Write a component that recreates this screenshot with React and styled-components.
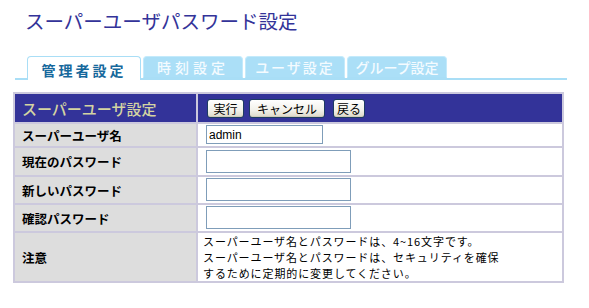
import React from "react";
import styled, { createGlobalStyle } from "styled-components";

const Global = createGlobalStyle`
  html, body { margin: 0; padding: 0; background: #ffffff; }
  body { font-family: "Noto Sans CJK JP", "Noto Sans", sans-serif; color: #000; }
`;

const Page = styled.div`
  width: 589px;
  height: 308px;
  overflow: hidden;
  padding: 10px 0 0 13px;
  box-sizing: border-box;
`;

const Title = styled.h1`
  margin: 0 0 0 12px;
  font-size: 19.5px;
  line-height: 22px;
  font-weight: normal;
  color: #333399;
  letter-spacing: 0;
`;

const TabBar = styled.div`
  display: flex;
  align-items: flex-end;
  gap: 2px;
  margin: 25px 0 0 2px;
  width: 552px;
  box-sizing: border-box;
  padding-left: 12px;
  border-bottom: 2px solid #a9def6;
  height: 23px;
`;

const Tab = styled.div`
  box-sizing: border-box;
  width: ${(p) => p.$w}px;
  height: ${(p) => (p.$active ? 24 : 22)}px;
  margin-bottom: ${(p) => (p.$active ? -2 : 0)}px;
  display: flex;
  align-items: center;
  justify-content: center;
  font-size: 14px;
  letter-spacing: ${(p) => p.$ls}px;
  font-weight: ${(p) => (p.$active ? 700 : 500)};
  border: 1px solid ${(p) => (p.$active ? "#a9def6" : "#c4eafb")};
  border-bottom: ${(p) => (p.$active ? "none" : "1px solid #a9def6")};
  border-radius: 4px 4px 0 0;
  background: ${(p) => (p.$active ? "#ffffff" : "#abdff7")};
  color: ${(p) => (p.$active ? "#16689c" : "#f4fbff")};
  padding-top: ${(p) => (p.$active ? 2 : 0)}px;
`;

const Table = styled.table`
  margin-top: 12px;
  width: 551px;
  border-collapse: separate;
  border-spacing: 2px;
  background: #ccc9dd;
  table-layout: fixed;
`;

const HeadCell = styled.td`
  background: #333399;
  height: 28px;
  padding: 0 0 0 ${(p) => p.$pl}px;
  box-sizing: border-box;
  vertical-align: middle;
`;

const HeadTitle = styled.span`
  font-size: 15px;
  color: #d4d4a2;
  font-weight: 500;
`;

const ButtonRow = styled.div`
  display: flex;
  align-items: center;
  gap: 5px;
  padding-left: 1px;
`;

const Button = styled.button`
  box-sizing: border-box;
  height: 19px;
  width: ${(p) => p.$w}px;
  margin-left: ${(p) => p.$ml || 0}px;
  padding: 0;
  font-family: "Noto Sans CJK JP", sans-serif;
  font-size: 12px;
  line-height: 17px;
  color: #000;
  border: 1px solid #1e3c62;
  border-radius: 3px;
  background: linear-gradient(#ffffff, #f2f1ea 60%, #dcd8c8);
  box-shadow: inset 0 -1px 0 #cfcbb8;
`;

const LabelCell = styled.td`
  background: #dddddd;
  width: 181px;
  padding: 0 0 0 7px;
  box-sizing: border-box;
  font-size: 12.5px;
  font-weight: 700;
  vertical-align: middle;
`;

const ValueCell = styled.td`
  background: #ffffff;
  padding: ${(p) => (p.$tight ? "0 8px" : "1px 8px 2px 8px")};
  box-sizing: border-box;
  vertical-align: middle;
  height: ${(p) => p.$h}px;
`;

const Input = styled.input`
  display: block;
  box-sizing: border-box;
  width: ${(p) => p.$w}px;
  height: ${(p) => p.$h}px;
  border: 1px solid #7f9db9;
  padding: 0 2px;
  margin: 0;
  font-family: "Liberation Sans", Arial, sans-serif;
  font-size: 12px;
  color: #000;
  outline: none;
`;

const Notes = styled.div`
  font-size: 11px;
  line-height: 16px;
  letter-spacing: 0.9px;
  margin-left: -3px;
  color: #000;
`;

const fields = [
  { label: "スーパーユーザ名", value: "admin", w: 117, h: 19, rh: 22 },
  { label: "現在のパスワード", value: "", w: 145, h: 23, rh: 27 },
  { label: "新しいパスワード", value: "", w: 145, h: 23, rh: 26 },
  { label: "確認パスワード", value: "", w: 145, h: 23, rh: 26 },
];

export default function App() {
  return (
    <>
      <Global />
      <Page>
        <Title>スーパーユーザパスワード設定</Title>
        <TabBar>
          <Tab $active $w={114} $ls={3}>管理者設定</Tab>
          <Tab $w={100} $ls={4}>時刻設定</Tab>
          <Tab $w={100} $ls={2}>ユーザ設定</Tab>
          <Tab $w={100} $ls={0}>グループ設定</Tab>
        </TabBar>
        <Table>
          <tbody>
            <tr>
              <HeadCell $pl={7} style={{ width: 181 }}>
                <HeadTitle>スーパーユーザ設定</HeadTitle>
              </HeadCell>
              <HeadCell $pl={8}>
                <ButtonRow>
                  <Button $w={37}>実行</Button>
                  <Button $w={76}>キャンセル</Button>
                  <Button $w={32} $ml={3}>戻る</Button>
                </ButtonRow>
              </HeadCell>
            </tr>
            {fields.map((f) => (
              <tr key={f.label}>
                <LabelCell>{f.label}</LabelCell>
                <ValueCell $h={f.rh}>
                  <Input
                    type={f.value ? "text" : "password"}
                    defaultValue={f.value}
                    $w={f.w}
                    $h={f.h}
                  />
                </ValueCell>
              </tr>
            ))}
            <tr>
              <LabelCell>注意</LabelCell>
              <ValueCell $h={48} $tight>
                <Notes>
                  スーパーユーザ名とパスワードは、4~16文字です。
                  <br />
                  スーパーユーザ名とパスワードは、セキュリティを確保
                  <br />
                  するために定期的に変更してください。
                </Notes>
              </ValueCell>
            </tr>
          </tbody>
        </Table>
      </Page>
    </>
  );
}
